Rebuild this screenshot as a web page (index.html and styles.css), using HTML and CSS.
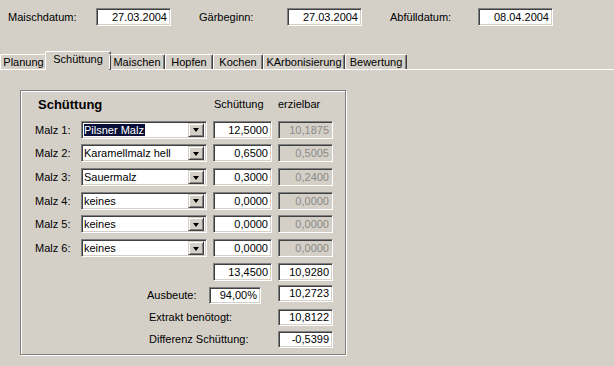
FILE: index.html
```html
<!DOCTYPE html>
<html lang="de">
<head>
<meta charset="utf-8">
<title>Schüttung</title>
<link rel="stylesheet" href="styles.css">
</head>
<body>
<div class="top">
  <div class="field"><span class="flabel">Maischdatum:</span><span class="box num date">27.03.2004</span></div>
  <div class="field"><span class="flabel">Gärbeginn:</span><span class="box num date">27.03.2004</span></div>
  <div class="field"><span class="flabel">Abfülldatum:</span><span class="box num date">08.04.2004</span></div>
</div>

<div class="tabs">
  <div class="tab">Planung</div>
  <div class="tab active">Schüttung</div>
  <div class="tab">Maischen</div>
  <div class="tab">Hopfen</div>
  <div class="tab">Kochen</div>
  <div class="tab">KArbonisierung</div>
  <div class="tab">Bewertung</div>
</div>

<div class="panel">
  <div class="group">
    <div class="malz-grid">
      <div class="heading">Schüttung</div>
      <div class="colhead c3">Schüttung</div>
      <div class="colhead c4">erzielbar</div>

      <div class="lbl">Malz 1:</div>
      <div class="box combo"><span class="ctext"><span class="sel">Pilsner Malz</span></span><span class="dd"><span class="tri"></span></span></div>
      <div class="box num w59">12,5000</div>
      <div class="box num w55 dis">10,1875</div>

      <div class="lbl">Malz 2:</div>
      <div class="box combo"><span class="ctext">Karamellmalz hell</span><span class="dd"><span class="tri"></span></span></div>
      <div class="box num w59">0,6500</div>
      <div class="box num w55 dis">0,5005</div>

      <div class="lbl">Malz 3:</div>
      <div class="box combo"><span class="ctext">Sauermalz</span><span class="dd"><span class="tri"></span></span></div>
      <div class="box num w59">0,3000</div>
      <div class="box num w55 dis">0,2400</div>

      <div class="lbl">Malz 4:</div>
      <div class="box combo"><span class="ctext">keines</span><span class="dd"><span class="tri"></span></span></div>
      <div class="box num w59">0,0000</div>
      <div class="box num w55 dis">0,0000</div>

      <div class="lbl">Malz 5:</div>
      <div class="box combo"><span class="ctext">keines</span><span class="dd"><span class="tri"></span></span></div>
      <div class="box num w59">0,0000</div>
      <div class="box num w55 dis">0,0000</div>

      <div class="lbl">Malz 6:</div>
      <div class="box combo"><span class="ctext">keines</span><span class="dd"><span class="tri"></span></span></div>
      <div class="box num w59">0,0000</div>
      <div class="box num w55 dis">0,0000</div>

      <div class="box num w59 c3">13,4500</div>
      <div class="box num w55 c4">10,9280</div>
    </div>

    <div class="lower-grid">
      <div class="lbl l2 endrow">Ausbeute:</div>
      <div class="box num w52 endrow">94,00%</div>
      <div class="box num w55 r c5">10,2723</div>

      <div class="lbl lspan">Extrakt benötogt:</div>
      <div class="box num w55 r c5">10,8122</div>

      <div class="lbl lspan">Differenz Schüttung:</div>
      <div class="box num w55 r c5">-0,5399</div>
    </div>
  </div>
</div>
</body>
</html>
```

FILE: styles.css
```css
html, body {
  margin: 0;
  padding: 0;
}
body {
  width: 614px;
  height: 366px;
  overflow: hidden;
  background: #d4d0c8;
  font-family: "Liberation Sans", Arial, sans-serif;
  font-size: 11px;
  color: #000;
}

/* sunken edit box */
.box {
  box-sizing: border-box;
  height: 18px;
  background: #fff;
  border: 1px solid;
  border-color: #808080 #ffffff #ffffff #808080;
  box-shadow: inset 1px 1px 0 #404040, inset -1px -1px 0 #d4d0c8;
  line-height: 16px;
  white-space: nowrap;
  overflow: hidden;
}
.num {
  text-align: right;
  padding-right: 3px;
}
.dis {
  background: #d4d0c8;
  color: #8c8a86;
}

/* top date row */
.top {
  display: flex;
  column-gap: 28px;
  padding: 8px 0 0 8px;
}
.field {
  display: flex;
  align-items: center;
}
.flabel {
  width: 88px;
}
.date {
  width: 75px;
}

/* tabs */
.tabs {
  display: grid;
  grid-template-columns: 47px 62px 56px 48px 50px 82px 62px;
  align-items: end;
  height: 18px;
  margin-top: 25px;
  position: relative;
  z-index: 2;
}
.tab {
  box-sizing: border-box;
  height: 15px;
  border-left: 1px solid #fff;
  border-top: 1px solid #fff;
  border-right: 1px solid #404040;
  box-shadow: inset -1px 0 0 #808080;
  border-radius: 2px 2px 0 0;
  text-align: center;
  line-height: 14px;
  white-space: nowrap;
}
.tab.active {
  height: 19px;
  margin: 0 -2px -1px -2px;
  background: #d4d0c8;
  line-height: 14px;
  padding-bottom: 3px;
}

/* panel */
.panel {
  border-top: 1px solid #fff;
  position: relative;
  z-index: 1;
}
.group {
  box-sizing: border-box;
  width: 326px;
  height: 265px;
  margin: 20px 0 0 20px;
  border: 1px solid #808080;
  box-shadow: inset 1px 1px 0 #fff, 1px 1px 0 #fff;
  padding: 6px 0 0 14px;
}

.malz-grid {
  display: grid;
  grid-template-columns: 46px 132px 65px 55px;
  grid-auto-rows: 18px;
  row-gap: 5.7px;
  align-items: center;
}
.heading {
  grid-column: 1 / 3;
  align-self: start;
  padding-left: 3px;
  font-weight: bold;
  font-size: 13px;
  line-height: 15px;
}
.colhead {
  align-self: start;
  line-height: 15px;
}
.colhead.c3 {
  padding-left: 1px;
}
.c3 { grid-column: 3; }
.c4 { grid-column: 4; }
.lbl {
  white-space: nowrap;
}
.w59 { width: 59px; }
.w55 { width: 55px; }
.w52 { width: 52px; }

.combo {
  width: 126px;
  display: flex;
  align-items: center;
  padding: 2px 2px 2px 2px;
}
.ctext {
  flex: 1;
  line-height: 14px;
  overflow: hidden;
}
.sel {
  background: #08103a;
  color: #fff;
  padding: 0 1px 0 0;
}
.dd {
  box-sizing: border-box;
  width: 16px;
  height: 14px;
  background: #d4d0c8;
  border: 1px solid;
  border-color: #d4d0c8 #404040 #404040 #d4d0c8;
  box-shadow: inset 1px 1px 0 #fff, inset -1px -1px 0 #808080;
  display: flex;
  align-items: center;
  justify-content: center;
}
.tri {
  width: 0;
  height: 0;
  border-left: 3.5px solid transparent;
  border-right: 3.5px solid transparent;
  border-top: 4px solid #000;
  margin-top: 1px;
}

/* lower section */
.lower-grid {
  display: grid;
  grid-template-columns: 112px 62px 69px 55px;
  grid-template-rows: 19px 17px 17px;
  row-gap: 5px;
  margin-top: 4px;
  align-items: center;
}
.lower-grid .box {
  height: 17px;
  line-height: 15px;
}
.l2 { grid-column: 2; }
.endrow {
  align-self: end;
  line-height: 17px;
}
.lspan {
  grid-column: 2 / 4;
  padding-left: 2px;
}
.c5 { grid-column: 4; }
.r { align-self: start; }
.lower-grid .lspan + .r { align-self: center; }
```
